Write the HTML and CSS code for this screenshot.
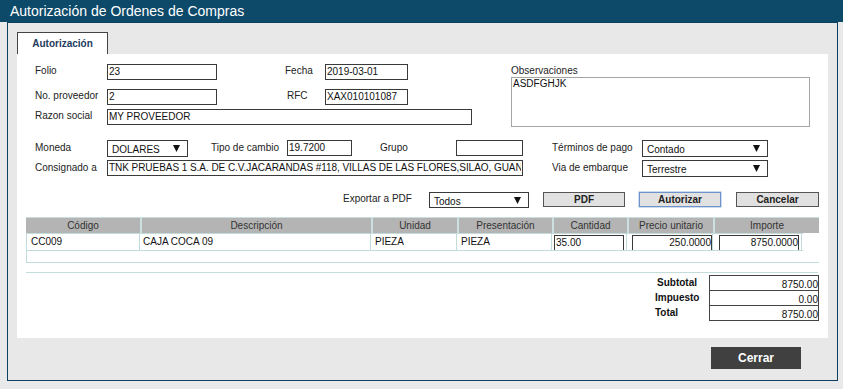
FILE: index.html
```html
<!DOCTYPE html>
<html lang="es">
<head>
<meta charset="utf-8">
<title>Autorización de Ordenes de Compras</title>
<link rel="stylesheet" href="styles.css">
</head>
<body>
<div class="titlebar">Autorización de Ordenes de Compras</div>
<div class="panel">
  <div class="tabs"><div class="tab">Autorización</div></div>
  <div class="content">
    <div class="top">
      <div class="topgrid">
        <span class="lbl">Folio</span>
        <div class="inp">23</div>
        <span></span>
        <span class="lbl">Fecha</span>
        <div class="inp">2019-03-01</div>
        <span></span>

        <span class="lbl">No. proveedor</span>
        <div class="inp">2</div>
        <span></span>
        <span class="lbl rfc">RFC</span>
        <div class="inp">XAX010101087</div>
        <span></span>

        <span class="lbl">Razon social</span>
        <div class="inp span-razon">MY PROVEEDOR</div>
      </div>
      <div class="obs">
        <span class="lbl">Observaciones</span>
        <div class="textarea">ASDFGHJK</div>
      </div>
    </div>

    <div class="midgrid">
      <span class="lbl">Moneda</span>
      <div class="sel"><span>DOLARES</span><svg class="arr" width="7" height="7" viewBox="0 0 7 7"><path d="M0 0H7L3.5 7Z"/></svg></div>
      <span></span>
      <span class="lbl">Tipo de cambio</span>
      <div class="inp">19.7200</div>
      <span></span>
      <span class="lbl">Grupo</span>
      <div class="inp"></div>
      <span></span>
      <span class="lbl">Términos de pago</span>
      <div class="sel"><span>Contado</span><svg class="arr" width="7" height="7" viewBox="0 0 7 7"><path d="M0 0H7L3.5 7Z"/></svg></div>

      <span class="lbl">Consignado a</span>
      <div class="inp span-cons"><span class="clip">TNK PRUEBAS 1 S.A. DE C.V.JACARANDAS #118, VILLAS DE LAS FLORES,SILAO, GUANA</span></div>
      <span></span>
      <span class="lbl">Via de embarque</span>
      <div class="sel"><span>Terrestre</span><svg class="arr" width="7" height="7" viewBox="0 0 7 7"><path d="M0 0H7L3.5 7Z"/></svg></div>
    </div>

    <div class="actions">
      <span class="lbl exp">Exportar a PDF</span>
      <div class="sel sel-exp"><span>Todos</span><svg class="arr" width="7" height="7" viewBox="0 0 7 7"><path d="M0 0H7L3.5 7Z"/></svg></div>
      <button class="btn">PDF</button>
      <button class="btn btn-focus">Autorizar</button>
      <button class="btn">Cancelar</button>
    </div>

    <div class="grid">
      <div class="ghead">
        <div class="hc">Código</div>
        <div class="hc">Descripción</div>
        <div class="hc">Unidad</div>
        <div class="hc">Presentación</div>
        <div class="hc">Cantidad</div>
        <div class="hc">Precio unitario</div>
        <div class="hc">Importe</div>
      </div>
      <div class="gbody">
        <div class="grow">
          <div class="dc">CC009</div>
          <div class="dc">CAJA COCA 09</div>
          <div class="dc">PIEZA</div>
          <div class="dc">PIEZA</div>
          <div class="dc dc-inp"><div class="inp cell-inp">35.00</div></div>
          <div class="dc dc-inp"><div class="inp cell-inp num">250.0000</div></div>
          <div class="dc dc-inp"><div class="inp cell-inp num">8750.0000</div></div>
        </div>
      </div>
    </div>

    <div class="rule"></div>

    <div class="totals">
      <div class="tlabels">
        <span>Subtotal</span>
        <span>Impuesto</span>
        <span>Total</span>
      </div>
      <div class="tbox">
        <div class="tv">8750.00</div>
        <div class="tv">0.00</div>
        <div class="tv">8750.00</div>
      </div>
    </div>
  </div>
  <div class="footer">
    <button class="cerrar">Cerrar</button>
  </div>
</div>
</body>
</html>
```

FILE: styles.css
```css
* { box-sizing: border-box; }

html, body {
  margin: 0;
  padding: 0;
}

body {
  background: #e9e9ec;
  font-family: "Liberation Sans", Arial, sans-serif;
  font-size: 10px;
  color: #222;
  width: 843px;
  height: 389px;
  overflow: hidden;
}

.titlebar {
  height: 22px;
  background: #0d4a6a;
  color: #fff;
  font-size: 14px;
  line-height: 22px;
  padding-left: 10px;
}

.panel {
  margin-left: 7px;
  width: 831px;
  height: 359px;
  border: 1px solid #0d3f5e;
  background: #e8e8e8;
  padding: 9px 8px 0 9px;
}

.tabs {
  display: flex;
  height: 22px;
}

.tab {
  width: 91px;
  height: 22px;
  background: #fff;
  border: 1px solid #444;
  border-bottom: none;
  font-weight: bold;
  color: #1c3b5e;
  text-align: center;
  line-height: 20px;
  padding-top: 1px;
}

.content {
  background: #fff;
  width: 811px;
  height: 284px;
  padding: 10px 0 0 18px;
}

.lbl {
  line-height: 13px;
  white-space: nowrap;
  color: #222;
}

.inp {
  height: 16px;
  border: 1px solid #3a3a3a;
  background: #fff;
  color: #111;
  line-height: 14px;
  padding: 0 1px;
  white-space: nowrap;
  overflow: hidden;
}

.clip {
  display: block;
  overflow: hidden;
  letter-spacing: -0.05px;
}

.sel {
  height: 17px;
  border: 1px solid #3a3a3a;
  background: #fff;
  color: #111;
  display: flex;
  align-items: center;
  justify-content: space-between;
  padding: 2px 7px 0 4px;
  line-height: 13px;
}

.sel .arr {
  margin-top: -2px;
  fill: #111;
}

/* top block */
.top {
  display: flex;
  align-items: flex-start;
}

.topgrid {
  display: grid;
  grid-template-columns: 72px 110px 68px 40px 83px 64px;
  grid-template-rows: 25px 20px 16px;
  align-items: start;
}

.rfc { padding-left: 2px; }

.span-razon {
  grid-column: 2 / 7;
}

.obs {
  margin-left: 39px;
  display: flex;
  flex-direction: column;
}

.textarea {
  width: 299px;
  height: 50px;
  border: 1px solid #a5a5a5;
  color: #111;
  padding: 0 1px;
  line-height: 12px;
}

/* middle block */
.midgrid {
  margin-top: 13px;
  display: grid;
  grid-template-columns: 72px 81px 23px 76px 65px 28px 76px 67px 29px 90px 126px;
  grid-template-rows: 20px 20px;
  align-items: start;
}

.midgrid .lbl { padding-top: 1px; }

.span-cons {
  grid-column: 2 / 9;
  min-width: 0;
}

/* actions */
.actions {
  margin-top: 12px;
  padding-left: 308px;
  display: flex;
  align-items: flex-start;
  height: 25px;
}

.exp {
  width: 86px;
}

.sel-exp {
  width: 100px;
  height: 16px;
}

.btn {
  width: 82px;
  height: 15px;
  margin-left: 14px;
  background: #e1e1e1;
  border: 1px solid #555;
  font-family: "Liberation Sans", Arial, sans-serif;
  font-size: 10px;
  font-weight: bold;
  color: #222;
  padding: 0;
  line-height: 13px;
}

.btn-focus {
  border-color: #6d93c9;
  box-shadow: 0 0 0 0.5px #9ab8e0;
}

.btn:last-child {
  margin-left: 15px;
  width: 83px;
}

/* grid/table */
.grid {
  margin-left: -9px;
  width: 793px;
}

.ghead {
  display: grid;
  grid-template-columns: 114px 231px 86px 95px 75px 86px 106px;
  height: 16px;
  background: #b4b4b4;
  border-top: 1px solid #c9dddd;
}

.hc {
  text-align: center;
  line-height: 15px;
  color: #333;
  border-left: 2px solid #cde0e0;
}

.hc:first-child { border-left: none; }

.gbody {
  height: 30px;
  border-left: 1px solid #c2dbdb;
  border-bottom: 1px solid #c2dbdb;
}

.grow {
  display: grid;
  grid-template-columns: 113px 231px 86px 95px 75px 86px 89px;
  height: 18px;
  border-top: 1px solid #c2dbdb;
  border-bottom: 1px solid #c2dbdb;
  width: 776px;
}

.dc {
  border-right: 1px solid #c2dbdb;
  line-height: 16px;
  padding-left: 4px;
  color: #111;
  white-space: nowrap;
  overflow: hidden;
}

.dc:nth-child(2) { padding-left: 3px; }

.dc-inp {
  padding: 1px 0 0 2px;
}

.dc-inp:nth-child(6) { padding-left: 5px; }
.dc-inp:nth-child(7) { padding-left: 6px; }

.cell-inp {
  width: 70px;
  height: 16px;
  line-height: 14px;
  padding: 0 0 0 1px;
}

.dc-inp:nth-child(6) .cell-inp { width: 80px; }
.dc-inp:nth-child(7) .cell-inp { width: 80px; }

.num {
  text-align: right;
  padding: 0;
}

.rule {
  margin: 9px 0 0 -9px;
  width: 792px;
  height: 1px;
  background: #c2dbdb;
}

.totals {
  margin-top: 2px;
  display: flex;
  padding-left: 620px;
}

.tlabels {
  width: 54px;
  display: flex;
  flex-direction: column;
  font-weight: bold;
  color: #111;
}

.tlabels span {
  height: 15px;
  line-height: 13px;
  padding-top: 1px;
}

.tlabels span:first-child { padding-left: 2px; }

.tbox {
  width: 110px;
  border: 1px solid #444;
}

.tv {
  height: 15px;
  line-height: 15px;
  text-align: right;
  color: #111;
  border-top: 1px solid #444;
  padding-top: 1px;
}

.tv:first-child {
  border-top: none;
  height: 14px;
  line-height: 14px;
  padding-top: 2px;
}

.footer {
  display: flex;
  justify-content: flex-end;
  padding-right: 28px;
  margin-top: 9px;
}

.cerrar {
  width: 90px;
  height: 22px;
  background: #404040;
  border: none;
  color: #fff;
  font-family: "Liberation Sans", Arial, sans-serif;
  font-size: 12px;
  font-weight: bold;
  padding: 0;
}
```
